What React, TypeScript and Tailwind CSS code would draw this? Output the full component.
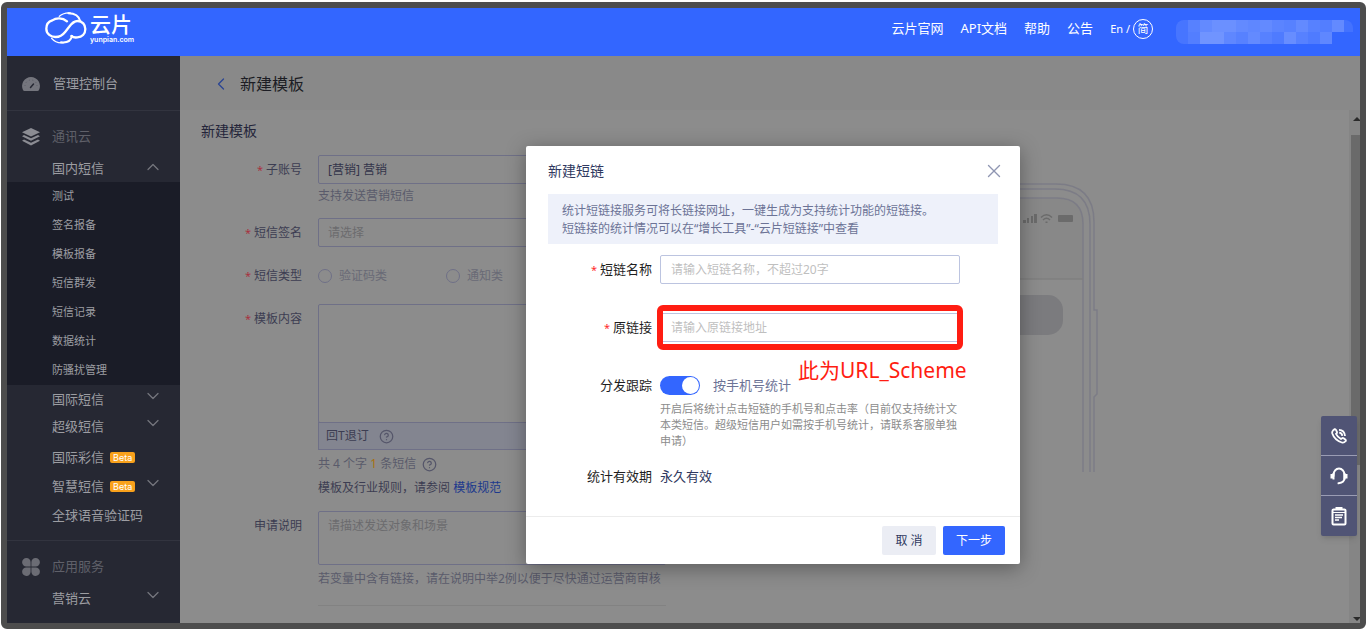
import { useState } from "react";
import { ChevronDown, ChevronLeft, ChevronUp, CircleHelp, X } from "lucide-react";
import clsx from "clsx";

const subMenu = ["测试", "签名报备", "模板报备", "短信群发", "短信记录", "数据统计", "防骚扰管理"];

const productMenu = [
  { name: "国际彩信", beta: true, arrow: false },
  { name: "智慧短信", beta: true, arrow: true },
  { name: "全球语音验证码", beta: false, arrow: false },
];

// opacity of each 12px block of the hidden account name
const mosaic = [
  [10, 18, 24, 28, 28, 24, 22, 24, 20, 18, 24, 18, 16, 24, 8],
  [10, 16, 30, 30, 22, 18, 24, 18, 14, 26, 18, 14, 22, 0, 0],
];

const Logo = () => (
  <a href="#" className="flex items-center gap-[3px] text-white" aria-label="云片">
    <svg width="42" height="32" viewBox="0 0 126 96" fill="none" stroke="currentColor" strokeLinecap="round">
      <path
        strokeWidth="7"
        d="M66 28C52 16 32 18 22 25C8 29 4 40 4 50C4 66 18 75 32 75C46 75 54 68 61 59L72 45C80 34 86 27 98 27C112 27 121 38 121 51C121 66 111 75 97 76C91 77 84 76 79 72"
      />
      <path strokeWidth="4" d="M43 13C55 3 66 2 76 3" />
      <path strokeWidth="6" d="M70 4C90 4 102 12 106 28" />
      <path strokeWidth="4" d="M20 79C30 91 42 94 56 92" />
      <path strokeWidth="6" d="M48 91C66 93 78 86 81 72" />
    </svg>
    <span className="flex flex-col gap-px">
      <span className="text-[21px] font-medium leading-[22px]">云片</span>
      <span className="font-['Inter'] text-[7px] font-semibold leading-[8px]">yunpian.com</span>
    </span>
  </a>
);

const Header = () => (
  <header className="flex h-12 items-center bg-[#3366ff] pl-[38px] pr-[7px] text-[13px] text-white">
    <div className="-mt-2">
      <Logo />
    </div>
    <nav className="-mt-1.5 ml-auto flex items-center gap-[17px]">
      <a href="#">云片官网</a>
      <a href="#">API文档</a>
      <a href="#">帮助</a>
      <a href="#">公告</a>
      <a href="#" className="flex items-center gap-[3px] text-[11px]">
        En /
        <span className="flex size-5 items-center justify-center rounded-full border border-white">简</span>
      </a>
    </nav>
    <svg className="ml-[23px] rounded-lg" width="177" height="24" aria-hidden="true">
      {mosaic.map((row, y) =>
        row.map((v, x) => (
          <rect key={`${x}-${y}`} x={x * 12} y={y * 12} width="12" height="12" fill="#fff" opacity={v / 100} />
        ))
      )}
    </svg>
  </header>
);

const GaugeIcon = () => (
  <svg width="18" height="14" viewBox="0 0 18 14">
    <path fill="#74757d" d="M9 0a9 9 0 0 0-8 13q.4 1 1.500 1h13q1.100 0 1.500-1A9 9 0 0 0 9 0Z" />
    <path stroke="#262833" strokeWidth="1.500" strokeLinecap="round" d="m8.500 10.500 3-3.500" />
    <path stroke="#5a5b65" strokeDasharray="1 2.500" fill="none" d="M3 9a6 6 0 0 1 12 0" />
  </svg>
);

const LayersIcon = () => (
  <svg width="18" height="18" viewBox="0 0 18 18" fill="#8b8c93">
    <path d="M9 0 18 4.200 9 8.400 0 4.200Z" />
    <path d="M2 7 9 10.300 16 7l2 1.300-9 4.400-9-4.400Z" />
    <path d="M2 11.500 9 14.800l7-3.300 2 1.300L9 17.500 0 12.800Z" />
  </svg>
);

const CloverIcon = () => (
  <svg width="18" height="18" viewBox="0 0 18 18" fill="#6b6c74">
    <path d="M4.500 0a4.200 4.200 0 0 1 4.100 4.300v4.300H4.300A4.300 4.300 0 0 1 4.500 0Z" />
    <path d="M13.500 0a4.200 4.200 0 0 0-4.100 4.300v4.300h4.300a4.300 4.300 0 0 0-.2-8.600Z" />
    <path d="M4.500 18a4.200 4.200 0 0 0 4.100-4.300V9.400H4.300a4.300 4.300 0 0 0 .2 8.600Z" />
    <path d="M13.500 18a4.200 4.200 0 0 1-4.100-4.300V9.400h4.300a4.300 4.300 0 0 1-.2 8.600Z" />
  </svg>
);

const Arrow = ({ up }: { up?: boolean }) => {
  const Icon = up ? ChevronUp : ChevronDown;
  return <Icon className={clsx("ml-auto text-[#74757d]", up ? "mb-1" : "mb-2")} size={20} strokeWidth={1.5} />;
};

const Beta = () => (
  <span className="ml-[6px] rounded-xs bg-[#f9a11b] px-[3px] font-['Inter'] text-[9px] leading-[11px] text-white">
    Beta
  </span>
);

const Sidebar = () => {
  const itemClass = "flex items-center pl-[45px] pr-[17px]";
  const groupClass = "flex h-8 items-center gap-3 pl-[15px] text-[#5f6069]";

  return (
    <aside className="w-[173px] shrink-0 bg-[#262833] text-[13px] text-[#9c9da2]">
      <a href="#" className="flex h-[55px] items-center gap-[13px] border-b border-[#32343f] pl-[15px] pt-0.5">
        <GaugeIcon />
        管理控制台
      </a>
      <div className="border-b border-[#32343f] py-2.5">
        <h2 className={groupClass}>
          <LayersIcon />
          通讯云
        </h2>
        <a href="#" className={clsx(itemClass, "h-[29px] pt-0.5")}>
          国内短信
          <Arrow up />
        </a>
        <ul className="bg-[#1a1c27] text-[11px]">
          {subMenu.map((item) => (
            <li key={item}>
              <a href="#" className={clsx(itemClass, "h-[29px]")}>
                {item}
              </a>
            </li>
          ))}
        </ul>
        <a href="#" className={clsx(itemClass, "h-[30px]")}>
          国际短信
          <Arrow />
        </a>
        <a href="#" className={clsx(itemClass, "mb-1 h-6")}>
          超级短信
          <Arrow />
        </a>
        {productMenu.map((item) => (
          <a key={item.name} href="#" className={clsx(itemClass, "h-[29px]")}>
            {item.name}
            {item.beta && <Beta />}
            {item.arrow && <Arrow />}
          </a>
        ))}
      </div>
      <div className="pt-2.5">
        <h2 className={groupClass}>
          <CloverIcon />
          应用服务
        </h2>
        <a href="#" className={clsx(itemClass, "h-8")}>
          营销云
          <Arrow />
        </a>
      </div>
    </aside>
  );
};

const Required = () => <span className="mr-[3px] text-[11px] text-[#a83240]">*</span>;

const TemplateForm = () => {
  const labelClass = "w-[101px] shrink-0 text-right leading-[30px] text-[#3c3d52]";
  const boxClass = "block w-full rounded-xs border border-[#6f7087] bg-transparent px-[9px]";

  return (
    <form className="w-[465px] shrink-0 text-[12px] text-[#5a5b6b]">
      <div className="flex gap-4 pt-[3px]">
        <label htmlFor="account" className={labelClass}>
          <Required />
          子账号
        </label>
        <div className="flex-1">
          <select id="account" className={clsx(boxClass, "h-[29px] appearance-none text-[#33344a]")}>
            <option>[营销] 营销</option>
          </select>
          <p className="leading-6">支持发送营销短信</p>
        </div>
      </div>
      <div className="mt-2.5 flex gap-4">
        <label htmlFor="sign" className={labelClass}>
          <Required />
          短信签名
        </label>
        <div className="flex-1">
          <select id="sign" className={clsx(boxClass, "h-[29px] appearance-none text-[#6b6b6e]")}>
            <option>请选择</option>
          </select>
        </div>
      </div>
      <div className="mt-[13px] flex gap-4">
        <span className={labelClass}>
          <Required />
          短信类型
        </span>
        <div className="flex items-center text-[#696a76]">
          <label className="flex w-32 items-center gap-[7px]">
            <input type="radio" name="type" className="size-3.5 appearance-none rounded-full border border-[#6f7087]" />
            验证码类
          </label>
          <label className="flex items-center gap-[7px]">
            <input type="radio" name="type" className="size-3.5 appearance-none rounded-full border border-[#6f7087]" />
            通知类
          </label>
        </div>
      </div>
      <div className="mt-[13px] flex gap-4">
        <label htmlFor="content" className={labelClass}>
          <Required />
          模板内容
        </label>
        <div className="flex-1">
          <textarea id="content" className={clsx(boxClass, "h-[119px] resize-none")} />
          <div className="-mt-px flex h-7 items-center gap-2.5 border border-[#6f7087] bg-[#838590] pl-[7px] text-[#3c3d52]">
            回T退订
            <CircleHelp size={15} strokeWidth={2} className="text-[#55566a]" />
          </div>
          <p className="flex items-center gap-1.5 leading-7">
            <span>
              共 4 个字 <span className="text-[#a8700c]">1</span> 条短信
            </span>
            <CircleHelp size={15} strokeWidth={2} className="text-[#55566a]" />
          </p>
          <p className="leading-5 text-[#3c3d52]">
            模板及行业规则，请参阅{" "}
            <a href="#" className="text-[#1c398c]">
              模板规范
            </a>
          </p>
        </div>
      </div>
      <div className="mt-[13px] flex gap-4">
        <label htmlFor="remark" className={labelClass}>
          申请说明
        </label>
        <div className="flex-1">
          <textarea
            id="remark"
            placeholder="请描述发送对象和场景"
            className={clsx(boxClass, "h-[54px] resize-none pt-[5px] placeholder:text-[#6b6b6e]")}
          />
          <p className="whitespace-nowrap border-b border-[#828282] pb-3 leading-7">
            若变量中含有链接，请在说明中举2例以便于尽快通过运营商审核
          </p>
        </div>
      </div>
    </form>
  );
};

const PhonePreview = () => (
  <svg
    className="ml-[134px] mt-[30px] shrink-0"
    width="300"
    height="290"
    viewBox="0 0 300 290"
    fill="none"
    stroke="#7c7c86"
    strokeWidth="1.500"
  >
    <path fill="#888" stroke="none" d="M17 97V42Q17 16 43 16H257Q283 16 283 42V97Z" />
    <path d="M6 290V40Q6 2 44 2H256Q294 2 294 40V128H297V212L294 215V290" />
    <path d="M10 290V42Q10 7 45 7H255Q290 7 290 42V290" />
    <path d="M17 290V42Q17 16 43 16H257Q283 16 283 42V290" />
    <path stroke="#7f7f7f" d="M17 97H283" />
    <rect x="60" y="113" width="203" height="40" rx="15" fill="#7b7b7e" stroke="none" />
    <g fill="#6b6b6b" stroke="none">
      <rect x="223" y="38" width="3" height="3" />
      <rect x="227" y="36" width="2" height="5" />
      <rect x="231" y="34" width="2" height="7" />
      <rect x="234" y="32" width="3" height="9" />
      <rect x="258" y="33" width="15" height="7" rx="1" />
    </g>
    <g stroke="#6b6b6b">
      <path d="M241 35.500Q246.500 30 252 35.500M243 38Q246.500 34.500 250 38M245.500 40.300h2" />
    </g>
  </svg>
);

const Scrollbar = () => (
  <div className="flex w-[11px] shrink-0 flex-col overflow-hidden bg-[#858585] pl-0.5" aria-hidden="true">
    <svg width="12" height="25" viewBox="0 0 12 25">
      <path fill="#2a2a2a" d="m6 7 4 4H2Z" />
    </svg>
    <div className="h-[330px] bg-[#6a6a6a]" />
    <svg className="mt-auto" width="12" height="12" viewBox="0 0 12 12">
      <path fill="#2a2a2a" d="M6 10 2 6h8Z" />
    </svg>
  </div>
);

const ShortLinkDialog = () => {
  const [track, setTrack] = useState(true);
  const labelClass = "w-[104px] shrink-0 text-right text-[#1f1f1f]";
  const inputClass =
    "block h-[29px] w-[300px] rounded-xs border border-[#bcc4e0] px-2.5 text-[12px] placeholder:text-[#bfbfbf]";

  return (
    <div
      role="dialog"
      aria-labelledby="dialog-title"
      className="w-[494px] rounded-xs bg-white text-[13px] text-[#303960] shadow-[0_4px_20px_rgba(0,0,0,0.35)]"
    >
      <div className="flex h-12 items-center justify-between pl-[22px] pr-[15px]">
        <h2 id="dialog-title" className="text-[14px]">
          新建短链
        </h2>
        <button type="button" aria-label="关闭" className="pt-0.5 text-[#8f96b2]">
          <X size={22} strokeWidth={1.5} />
        </button>
      </div>
      <p className="mx-[22px] h-[50px] bg-[#eef1fa] pl-3.5 pt-2 text-[12px] leading-[18px] text-[#6c7396]">
        统计短链接服务可将长链接网址，一键生成为支持统计功能的短链接。
        <br />
        短链接的统计情况可以在“增长工具”-“云片短链接”中查看
      </p>
      <form className="pl-[22px] pt-[11px]">
        <div className="flex items-center gap-2">
          <label htmlFor="link-name" className={labelClass}>
            <span className="mr-[3px] text-[11px] text-[#ff2b2b]">*</span>短链名称
          </label>
          <input id="link-name" placeholder="请输入短链名称，不超过20字" className={inputClass} />
        </div>
        <div className="mt-[29px] flex items-center gap-2">
          <label htmlFor="link-url" className={labelClass}>
            <span className="mr-[3px] text-[11px] text-[#ff2b2b]">*</span>原链接
          </label>
          <div className="relative">
            <input id="link-url" placeholder="请输入原链接地址" className={inputClass} />
            <div className="pointer-events-none absolute -inset-x-[3px] -inset-y-2 rounded-md border-[6px] border-[#ff1d12]" />
            <span className="absolute left-[138px] top-[43px] whitespace-nowrap text-[21px] leading-7 text-[#ff1d12]">
              此为URL_Scheme
            </span>
          </div>
        </div>
        <div className="mt-[34px] flex items-center gap-2">
          <label htmlFor="track" className={labelClass}>
            分发跟踪
          </label>
          <div className="flex items-center gap-[13px] text-[#6c7396]">
            <input
              id="track"
              type="checkbox"
              role="switch"
              checked={track}
              onChange={(e) => setTrack(e.target.checked)}
              className="flex h-[19px] w-10 appearance-none items-center rounded-full bg-[#c3c8d8] px-px before:size-[17px] before:rounded-full before:bg-white checked:justify-end checked:bg-[#3366ff]"
            />
            <label htmlFor="track">按手机号统计</label>
          </div>
        </div>
        <p className="ml-28 mt-[5px] w-[300px] text-[11px] leading-4 text-[#8c8c8c]">
          开启后将统计点击短链的手机号和点击率（目前仅支持统计文本类短信。超级短信用户如需按手机号统计，请联系客服单独申请）
        </p>
        <div className="mt-[18px] flex gap-2">
          <span className={labelClass}>统计有效期</span>
          <span>永久有效</span>
        </div>
      </form>
      <div className="mt-[30px] flex justify-end gap-[7px] border-t border-[#ececec] pb-[9px] pr-[15px] pt-[9px]">
        <button type="button" className="h-[29px] w-[54px] rounded-xs bg-[#ebedf4] text-[12px]">
          取 消
        </button>
        <button type="button" className="h-[29px] w-[62px] rounded-xs bg-[#3366ff] text-[12px] text-white">
          下一步
        </button>
      </div>
    </div>
  );
};

const ContactBar = () => {
  const buttonClass = "flex h-10 w-9 items-center justify-center";

  return (
    <div className="flex flex-col divide-y divide-[#9a9cb4] rounded-xs bg-[#505475] text-white shadow-md">
      <button type="button" aria-label="电话" className={buttonClass}>
        <svg width="16" height="16" viewBox="0 0 16 16" fill="none" stroke="currentColor" strokeWidth="1.800">
          <path
            strokeLinejoin="round"
            d="M2 2.500 3.500 1.200Q4.300 1 4.800 1.700L6 4Q6.300 5 5 5.800Q6.500 9 10 11L11.500 10Q12 9.800 12.600 10.200L14.600 11.800Q15.200 12.500 14.500 13.300Q13 15.200 10.800 14.500Q3.500 12 1.300 5.500Q.8 3.800 2 2.500Z"
          />
          <path d="M8 1.800Q13.500 2 14 8M8.200 4.600Q11 4.800 11.300 7.800" />
        </svg>
      </button>
      <button type="button" aria-label="客服" className={buttonClass}>
        <svg width="18" height="18" viewBox="0 0 18 18" fill="none" stroke="currentColor" strokeWidth="2">
          <path d="M3.500 9V8a5.500 6.500 0 0 1 11 0V11Q14.500 15.500 8.500 16.300" strokeLinecap="round" />
          <path d="M1.500 7v4.500M3.500 6v6.500M14.500 6v6.500M16.500 7v4.500" />
        </svg>
      </button>
      <button type="button" aria-label="工单" className={buttonClass}>
        <svg width="16" height="20" viewBox="0 0 16 20" fill="none" stroke="currentColor">
          <rect x="1.500" y="3.500" width="13" height="15" rx="1" strokeWidth="2" />
          <path strokeWidth="3" d="M4.500 2.500h7" />
          <path strokeWidth="1" d="M2 6.500h12" />
          <path strokeWidth="1.500" d="M4 9h8M4 11.500h7M4 14h4" />
        </svg>
      </button>
    </div>
  );
};

const App = () => (
  <div className="relative flex min-h-screen flex-col bg-white pl-px pt-0.5 font-['Noto_Sans','Noto_Sans_CJK_SC',sans-serif]">
    <div className="flex flex-1 flex-col rounded-md border-6 border-[#4d4d4d]">
      <Header />
      <div className="flex flex-1">
        <Sidebar />
        <main className="flex min-w-0 flex-1 flex-col bg-[#8c8c8c]">
          <div className="flex h-[54px] shrink-0 items-center gap-[9px] bg-[#898989] pl-[31px] pt-0.5 text-[16px] text-[#1c1d24]">
            <a href="#" aria-label="返回" className="text-[#2a4594]">
              <ChevronLeft size={20} strokeWidth={1.5} />
            </a>
            <h1>新建模板</h1>
          </div>
          <div className="flex flex-1">
            <div className="min-w-0 flex-1 overflow-hidden pl-[21px]">
              <h2 className="text-[14px] leading-[42px] text-[#24253a]">新建模板</h2>
              <div className="flex items-start">
                <TemplateForm />
                <PhonePreview />
              </div>
            </div>
            <Scrollbar />
          </div>
        </main>
      </div>
    </div>
    <div className="absolute left-[180px] right-0 top-[146px] flex justify-center">
      <ShortLinkDialog />
    </div>
    <div className="absolute right-[9px] top-[416px]">
      <ContactBar />
    </div>
  </div>
);

export default App;
